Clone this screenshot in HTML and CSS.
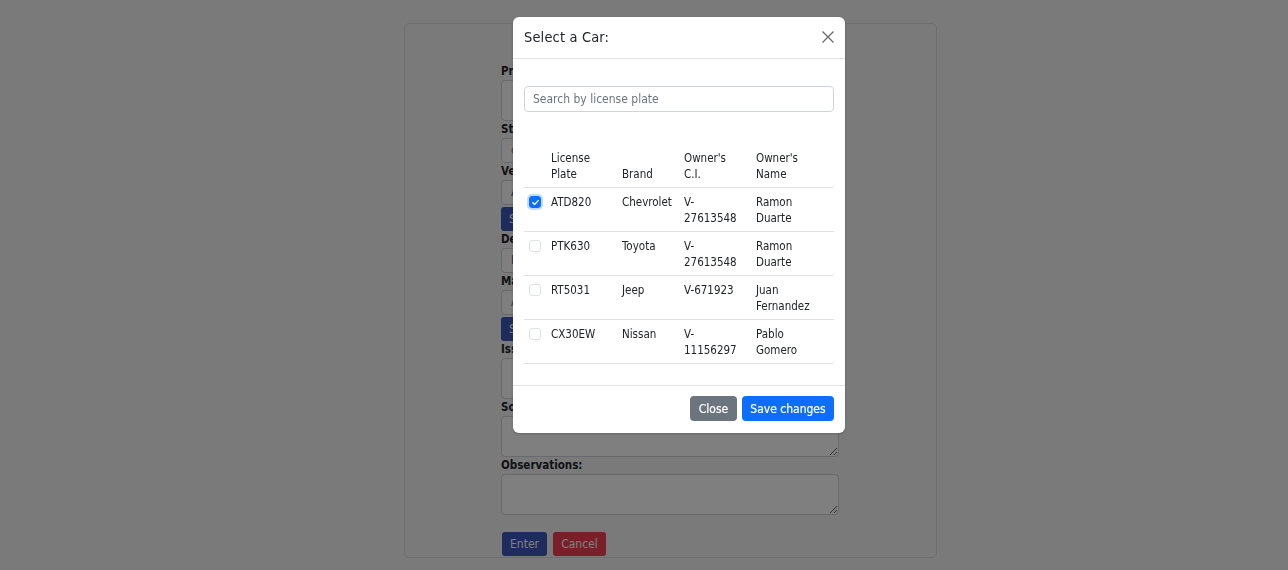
FILE: index.html
```html
<!DOCTYPE html>
<html lang="en">
<head>
<meta charset="utf-8">
<title>Select a Car</title>
<link rel="stylesheet" href="styles.css">
</head>
<body>
<div class="page">
  <div class="card">
    <form class="form">
      <label class="lbl">Problem:</label>
      <textarea class="area"></textarea>
      <label class="lbl">Status:</label>
      <div class="field muted">choose</div>
      <label class="lbl">Vehicle:</label>
      <div class="field link">Auto</div>
      <button type="button" class="btn-navy small">Select</button>
      <label class="lbl">Detail:</label>
      <div class="field link">Lunes</div>
      <label class="lbl">Make:</label>
      <div class="field muted">Auto</div>
      <button type="button" class="btn-navy small">Select</button>
      <label class="lbl">Issue:</label>
      <textarea class="area"></textarea>
      <label class="lbl">Solution:</label>
      <textarea class="area"></textarea>
      <label class="lbl">Observations:</label>
      <textarea class="area"></textarea>
      <div class="actions">
        <button type="button" class="btn-navy">Enter</button>
        <button type="button" class="btn-red">Cancel</button>
      </div>
    </form>
  </div>
</div>

<div class="backdrop"></div>

<div class="modal">
  <div class="modal-header">
    <h5 class="modal-title">Select a Car:</h5>
    <span class="close-x">
      <svg width="12" height="12" viewBox="0 0 12 12"><path d="M0.5 0.5 L11.5 11.5 M11.5 0.5 L0.5 11.5" stroke="#6b6b6b" stroke-width="1.3" fill="none"/></svg>
    </span>
  </div>
  <div class="modal-body">
    <div class="search">Search by license plate</div>
    <table class="cars">
      <colgroup>
        <col class="c-check"><col class="c-plate"><col class="c-brand"><col class="c-ci"><col class="c-name">
      </colgroup>
      <thead>
        <tr><th></th><th>License Plate</th><th>Brand</th><th class="ci">Owner's C.I.</th><th class="nm">Owner's Name</th></tr>
      </thead>
      <tbody>
        <tr><td><span class="cb checked"><svg width="9" height="9" viewBox="0 0 9 9"><path d="M1.8 4.7 L3.7 6.4 L7.2 2.6" stroke="#fff" stroke-width="1.4" fill="none" stroke-linecap="round" stroke-linejoin="round"/></svg></span></td><td>ATD820</td><td>Chevrolet</td><td class="ci">V-27613548</td><td class="nm">Ramon Duarte</td></tr>
        <tr><td><span class="cb"></span></td><td>PTK630</td><td>Toyota</td><td class="ci">V-27613548</td><td class="nm">Ramon Duarte</td></tr>
        <tr><td><span class="cb"></span></td><td>RT5031</td><td>Jeep</td><td class="ci">V-671923</td><td class="nm">Juan Fernandez</td></tr>
        <tr><td><span class="cb"></span></td><td>CX30EW</td><td>Nissan</td><td class="ci">V-11156297</td><td class="nm">Pablo Gomero</td></tr>
      </tbody>
    </table>
  </div>
  <div class="modal-footer">
    <button type="button" class="btn btn-gray">Close</button>
    <button type="button" class="btn btn-blue">Save changes</button>
  </div>
</div>
</body>
</html>
```

FILE: styles.css
```css
* { box-sizing: border-box; }

html, body {
  margin: 0;
  padding: 0;
}

body {
  background: #f5f5f5;
  font-family: "DejaVu Sans Condensed", "DejaVu Sans", sans-serif;
  font-stretch: semi-condensed;
  color: #212529;
  font-size: 12px;
  width: 1288px;
  height: 570px;
  overflow: hidden;
}

.page {
  padding-top: 23px;
}

.card {
  margin-left: 404px;
  width: 533px;
  height: 535px;
  border: 1px solid #dcdcdc;
  border-radius: 5px;
  background: #f5f5f5;
  padding: 39px 0 0 96px;
}

.form {
  width: 338px;
  display: flex;
  flex-direction: column;
  align-items: flex-start;
}

.lbl {
  display: block;
  font-weight: bold;
  font-size: 11.5px;
  line-height: 16px;
  margin-bottom: 1px;
}

.area {
  display: block;
  width: 338px;
  height: 41px;
  border: 1px solid #ced4da;
  border-radius: 4px;
  background: #fff;
  resize: vertical;
  margin: 0;
}

.field {
  width: 338px;
  height: 25px;
  border: 1px solid #ced4da;
  border-radius: 4px;
  background: #fff;
  padding: 0 9px;
  line-height: 23px;
  font-size: 12px;
}

.field.muted { color: #6c757d; }
.field.link { color: #2a5db0; }

.btn-navy, .btn-red {
  font-family: inherit;
  font-size: 12px;
  height: 24px;
  border: none;
  border-radius: 3px;
  color: #fff;
  padding: 0 8px;
}

.btn-navy { background: #3a58b8; }
.btn-red { background: #f03e52; }

.btn-navy.small { margin-top: 2px; }

.actions {
  display: flex;
  gap: 6px;
  margin-top: 17px;
  padding-left: 1px;
}

.btn-navy:not(.small) { width: 45px; padding: 0; }
.btn-red { width: 53px; padding: 0; }

.backdrop {
  position: fixed;
  inset: 0;
  background: rgba(0, 0, 0, 0.5);
}

.modal {
  position: fixed;
  top: 17px;
  left: 513px;
  width: 332px;
  background: #fff;
  border-radius: 6px;
  box-shadow: 0 1px 3px rgba(0, 0, 0, 0.2);
  overflow: hidden;
}

.modal-header {
  height: 42px;
  border-bottom: 1px solid #dee2e6;
  display: flex;
  align-items: center;
  justify-content: space-between;
  padding: 0 11px 1px 11px;
}

.modal-title {
  margin: 0;
  font-size: 14.5px;
  font-weight: normal;
  color: #212529;
  letter-spacing: 0.15px;
}

.close-x {
  display: flex;
  width: 12px;
  height: 12px;
}

.modal-body {
  padding: 27px 11px 21px;
}

.search {
  height: 26px;
  border: 1px solid #ced4da;
  border-radius: 4px;
  padding: 0 8px;
  line-height: 25px;
  color: #6c757d;
  font-size: 12px;
}

.cars {
  margin-top: 32px;
  width: 310px;
  table-layout: fixed;
  border-collapse: collapse;
  font-size: 11.5px;
  line-height: 16px;
}

.c-check { width: 22px; }
.c-plate { width: 71px; }
.c-brand { width: 62px; }
.c-ci { width: 72px; }
.c-name { width: 83px; }

.cars th, .cars td {
  padding: 6px 3px 5px 5px;
  border-bottom: 1px solid #dee2e6;
  text-align: left;
  font-weight: normal;
}

.cars th { vertical-align: bottom; }
.cars td { vertical-align: top; }

.cars .ci { padding-right: 12px; }
.cars .nm { padding-right: 18px; }

.cb {
  display: flex;
  align-items: center;
  justify-content: center;
  width: 12px;
  height: 12px;
  margin-top: 2px;
  border: 1px solid #dee2e6;
  border-radius: 3px;
  background: #fff;
}

.cb.checked {
  background: #0d6efd;
  border-color: #0d6efd;
  box-shadow: 0 0 0 2px rgba(13, 110, 253, 0.25);
}

.modal-footer {
  border-top: 1px solid #dee2e6;
  padding: 10px 11px 12px;
  display: flex;
  justify-content: flex-end;
  gap: 5px;
}

.btn {
  font-family: inherit;
  font-size: 12px;
  height: 25px;
  border: none;
  border-radius: 4px;
  color: #fff;
  padding: 0;
  -webkit-text-stroke: 0.2px #fff;
}

.btn-gray { background: #6c757d; width: 47px; }
.btn-blue { background: #0d6efd; width: 92px; }
```
